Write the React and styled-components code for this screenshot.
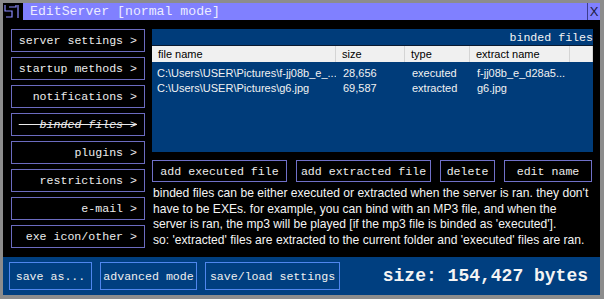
import React from "react";
import styled, { createGlobalStyle } from "styled-components";

const Global = createGlobalStyle`
  html, body { margin: 0; padding: 0; background: #8c8c8c; }
  * { box-sizing: border-box; }
`;

const mono = `"Liberation Mono", "Courier New", monospace`;
const sans = `"Liberation Sans", Arial, sans-serif`;

const Frame = styled.div`
  width: 604px;
  height: 299px;
  background: #8c8c8c;
  padding: 3px 4px 4px 3px;
  display: flex;
  flex-direction: column;
`;

const TitleBar = styled.div`
  height: 17px;
  background: #8080ff;
  display: flex;
  align-items: center;
  color: #ececff;
  font-family: ${mono};
  font-size: 13.2px;
`;

const IconBox = styled.div`
  width: 20px;
  height: 17px;
  background: #000;
  display: flex;
  align-items: center;
  justify-content: center;
  margin-right: 7px;
`;

const TitleText = styled.span`
  flex: 1;
  white-space: pre;
`;

const CloseBtn = styled.div`
  width: 13px;
  height: 17px;
  border-left: 1px solid #3c3c8c;
  display: flex;
  align-items: center;
  justify-content: center;
  color: #1a1a40;
  font-family: ${sans};
  font-size: 13px;
  line-height: 1;
`;

const Body = styled.div`
  flex: 1;
  background: #000;
  display: flex;
  gap: 7px;
  padding: 9px 0 0 8px;
`;

const Nav = styled.div`
  width: 134px;
  display: flex;
  flex-direction: column;
  gap: 5px;
`;

const NavButton = styled.div`
  height: 23px;
  border: 1px solid #6c6cc0;
  color: #ececec;
  font-family: ${mono};
  font-size: 11.6px;
  display: flex;
  align-items: center;
  justify-content: flex-end;
  padding-right: 7px;
  white-space: pre;
  font-style: ${(p) => (p.$struck ? "italic" : "normal")};
  text-decoration: ${(p) => (p.$struck ? "line-through" : "none")};
`;

const Right = styled.div`
  width: 441px;
  display: flex;
  flex-direction: column;
`;

const ListPanel = styled.div`
  height: 123px;
  background: #003c7a;
  display: flex;
  flex-direction: column;
`;

const PanelTitle = styled.div`
  height: 16px;
  text-align: right;
  color: #f4f4f4;
  font-family: ${mono};
  font-size: 11.6px;
  line-height: 17px;
  white-space: pre;
`;

const cols = "184px 69px 65px 100px 1fr";

const HeaderRow = styled.div`
  height: 17px;
  background: #f0f0f0;
  display: grid;
  grid-template-columns: ${cols};
  border-top: 1px solid #0a1a30;
`;

const HeaderCell = styled.div`
  font-family: ${sans};
  font-size: 11px;
  color: #000;
  padding-left: 6px;
  line-height: 16px;
  border-right: 1px solid #d4d4d4;
`;

const Rows = styled.div`
  padding-top: 4px;
`;

const Row = styled.div`
  height: 15px;
  display: grid;
  grid-template-columns: ${cols};
  font-family: ${sans};
  font-size: 11px;
  color: #f2f2f2;
  line-height: 15px;
`;

const Cell = styled.div`
  padding-left: ${(p) => (p.$first ? "5px" : "7px")};
  white-space: nowrap;
  overflow: hidden;
`;

const ActionRow = styled.div`
  display: flex;
  gap: 9px;
  margin-top: 8px;
`;

const ActionButton = styled.div`
  width: ${(p) => p.$w}px;
  height: 22px;
  border: 1px solid #7070c8;
  color: #ececec;
  font-family: ${mono};
  font-size: 11.6px;
  display: flex;
  align-items: center;
  justify-content: center;
  white-space: pre;
`;

const Info = styled.div`
  margin: 4px 0 0 1px;
  color: #f4f4f4;
  font-family: ${sans};
  font-size: 12.1px;
  line-height: 15.5px;
`;

const InfoLine = styled.div`
  white-space: nowrap;
`;

const BottomBar = styled.div`
  height: 38px;
  background: #003f80;
  display: flex;
  align-items: center;
  padding: 0 12px 0 6px;
  gap: 8px;
`;

const BarButton = styled.div`
  width: ${(p) => p.$w}px;
  height: 28px;
  border: 1px solid #4f86ee;
  color: #f0f0f0;
  font-family: ${mono};
  font-size: 11.6px;
  display: flex;
  align-items: center;
  justify-content: center;
  white-space: pre;
`;

const SizeText = styled.div`
  margin-left: auto;
  color: #f4f4f4;
  font-family: ${mono};
  font-weight: bold;
  font-size: 18px;
  white-space: pre;
`;

const navItems = [
  "server settings >",
  "startup methods >",
  "notifications >",
  "   binded files >",
  "plugins >",
  "restrictions >",
  "e-mail >",
  "exe icon/other >",
];

const files = [
  ["C:\\Users\\USER\\Pictures\\f-jj08b_e_...", "28,656", "executed", "f-jj08b_e_d28a5..."],
  ["C:\\Users\\USER\\Pictures\\g6.jpg", "69,587", "extracted", "g6.jpg"],
];

const infoLines = [
  "binded files can be either executed or extracted when the server is ran. they don't",
  "have to be EXEs. for example, you can bind with an MP3 file, and when the",
  "server is ran, the mp3 will be played [if the mp3 file is binded as 'executed'].",
  "so: 'extracted' files are extracted to the current folder and 'executed' files are ran.",
];

export default function App() {
  return (
    <>
      <Global />
      <Frame>
        <TitleBar>
          <IconBox>
            <svg width="18" height="15" viewBox="0 0 18 15">
              <path
                d="M1 1 V7 H8 V13 H2 M5 3 H12 V1 M14 1 V14"
                fill="none"
                stroke="#8c8cff"
                strokeWidth="1.2"
              />
            </svg>
          </IconBox>
          <TitleText>EditServer [normal mode]</TitleText>
          <CloseBtn>X</CloseBtn>
        </TitleBar>
        <Body>
          <Nav>
            {navItems.map((n) => (
              <NavButton key={n} $struck={n.includes("binded")}>
                {n}
              </NavButton>
            ))}
          </Nav>
          <Right>
            <ListPanel>
              <PanelTitle>binded files</PanelTitle>
              <HeaderRow>
                <HeaderCell>file name</HeaderCell>
                <HeaderCell>size</HeaderCell>
                <HeaderCell>type</HeaderCell>
                <HeaderCell>extract name</HeaderCell>
                <HeaderCell />
              </HeaderRow>
              <Rows>
                {files.map((f) => (
                  <Row key={f[0]}>
                    <Cell $first>{f[0]}</Cell>
                    <Cell>{f[1]}</Cell>
                    <Cell>{f[2]}</Cell>
                    <Cell>{f[3]}</Cell>
                    <Cell />
                  </Row>
                ))}
              </Rows>
            </ListPanel>
            <ActionRow>
              <ActionButton $w={135}>add executed file</ActionButton>
              <ActionButton $w={135}>add extracted file</ActionButton>
              <ActionButton $w={55}>delete</ActionButton>
              <ActionButton $w={88}>edit name</ActionButton>
            </ActionRow>
            <Info>
              {infoLines.map((l) => (
                <InfoLine key={l}>{l}</InfoLine>
              ))}
            </Info>
          </Right>
        </Body>
        <BottomBar>
          <BarButton $w={83}>save as...</BarButton>
          <BarButton $w={97}>advanced mode</BarButton>
          <BarButton $w={135}>save/load settings</BarButton>
          <SizeText>size: 154,427 bytes</SizeText>
        </BottomBar>
      </Frame>
    </>
  );
}
